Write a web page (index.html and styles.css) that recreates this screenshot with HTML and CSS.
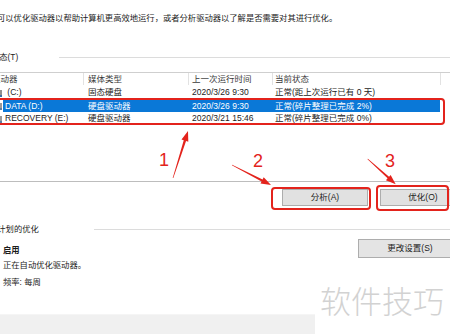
FILE: index.html
```html
<!DOCTYPE html>
<html lang="zh-CN">
<head>
<meta charset="utf-8">
<title>优化驱动器</title>
<link rel="stylesheet" href="styles.css">
</head>
<body>
<div class="page">
  <div class="intro">可以优化驱动器以帮助计算机更高效地运行，或者分析驱动器以了解是否需要对其进行优化。</div>

  <div class="group-head status-head">
    <span class="group-label status-label">状态(T)</span>
    <span class="group-line"></span>
  </div>

  <div class="listview">
    <div class="lv-row lv-header">
      <div class="c1">驱动器</div>
      <div class="c2">媒体类型</div>
      <div class="c3">上一次运行时间</div>
      <div class="c4">当前状态</div>
    </div>
    <div class="lv-row">
      <div class="c1"><svg class="drive" viewBox="0 0 14 10" width="14" height="10"><rect x="1" y="2" width="12" height="7" fill="#8f8f8f"/><rect x="1" y="7" width="12" height="2" fill="#3b6fa8"/></svg><span class="name"> (C:)</span></div>
      <div class="c2">固态硬盘</div>
      <div class="c3">2020/3/26 9:30</div>
      <div class="c4">正常(距上次运行已有 0 天)</div>
    </div>
    <div class="lv-row selected">
      <div class="c1"><svg class="drive" viewBox="0 0 14 10" width="14" height="10"><rect x="1" y="2" width="12" height="7" fill="#9a9a9a"/><rect x="1" y="7" width="12" height="2" fill="#5d7fa3"/></svg><span class="name">DATA (D:)</span></div>
      <div class="c2">硬盘驱动器</div>
      <div class="c3">2020/3/26 9:30</div>
      <div class="c4">正常(碎片整理已完成 2%)</div>
    </div>
    <div class="lv-row">
      <div class="c1"><svg class="drive" viewBox="0 0 14 10" width="14" height="10"><rect x="1" y="2" width="12" height="7" fill="#9a9a9a"/><rect x="1" y="7" width="12" height="2" fill="#5d7fa3"/></svg><span class="name">RECOVERY (E:)</span></div>
      <div class="c2">硬盘驱动器</div>
      <div class="c3">2020/3/21 15:46</div>
      <div class="c4">正常(碎片整理已完成 0%)</div>
    </div>
  </div>

  <div class="actions">
    <button class="btn btn-analyze">分析(A)</button>
    <button class="btn btn-optimize">优化(O)</button>
  </div>

  <div class="group-head sched-head">
    <span class="group-label sched-label">已计划的优化</span>
    <span class="group-line"></span>
  </div>

  <div class="sched-body">
    <div class="sched-info">
      <div class="sched-on">启用</div>
      <div class="sched-line sched-auto">正在自动优化驱动器。</div>
      <div class="sched-line sched-freq">频率: 每周</div>
    </div>
    <button class="btn btn-settings">更改设置(S)</button>
  </div>

  <div class="footer-bar"></div>

  <div class="watermark">软件技巧</div>

  <svg class="annot" width="450" height="334" viewBox="0 0 450 334">
    <rect x="-3" y="99" width="447" height="25" rx="3" class="rbox"/>
    <rect x="272" y="188" width="98" height="21" rx="3" class="rbox"/>
    <rect x="377" y="186" width="71" height="24" rx="3" class="rbox"/>
    <polygon class="arrow" points="172.7,177.9 183.75,140.23 181.5,139.5 188,131 188.3,141.7 186.05,140.97 173.3,178.1"/>
    <polygon class="arrow" points="232.14,164.73 262.6,179.45 263.7,177.3 271,185 260.5,183.55 261.6,181.41 231.86,165.27"/>
    <polygon class="arrow" points="367.9,158.78 389.04,176.74 390.66,174.96 395.7,184.3 385.94,180.14 387.56,178.36 367.5,159.22"/>
    <text x="159" y="166" class="num">1</text>
    <text x="253" y="167" class="num">2</text>
    <text x="385" y="167" class="num">3</text>
  </svg>
</div>
</body>
</html>
```

FILE: styles.css
```css
html, body {
  margin: 0;
  padding: 0;
  background: #ffffff;
}

body {
  width: 450px;
  height: 334px;
  overflow: hidden;
}

.page {
  position: relative;
  width: 450px;
  height: 334px;
  overflow: hidden;
  font-family: "Liberation Sans", "Noto Sans CJK SC", sans-serif;
  font-size: 8.5px;
  color: #1c1c1c;
}

.intro {
  margin-top: 12px;
  margin-left: -3px;
  height: 12px;
  line-height: 12px;
  font-size: 8.3px;
  white-space: nowrap;
}

.group-head {
  display: flex;
  align-items: center;
  height: 12px;
  line-height: 12px;
}

.status-head {
  margin-top: 27px;
}

.group-label {
  flex: none;
  white-space: nowrap;
}

.status-label {
  margin-left: -9px;
  font-size: 8.3px;
}

.group-line {
  flex: 1;
  height: 1px;
  background: #dcdcdc;
}

.status-head .group-line {
  margin-left: 41px;
}

.listview {
  margin-top: 9px;
  margin-left: -16px;
  width: 482px;
  height: 110px;
  box-sizing: border-box;
  border-top: 1px solid #cfcfcf;
  border-bottom: 1px solid #bdbdbd;
}

.lv-row {
  display: grid;
  grid-template-columns: 100px 105px 84px 168px;
  height: 13px;
  line-height: 13px;
  white-space: nowrap;
}

.lv-row > div {
  box-sizing: border-box;
  overflow: hidden;
}

.lv-header {
  color: #3a3a3a;
}

.lv-header > div {
  height: 12px;
  border-right: 1px solid #e2e2e2;
}

.c1 {
  padding-left: 8px;
}

.lv-row:not(.lv-header) .c1 {
  display: flex;
  align-items: center;
  padding-left: 5px;
}

.drive {
  flex: none;
  margin-right: 2px;
}

.name {
  white-space: pre;
}

.c2 {
  padding-left: 4px;
}

.c3 {
  padding-left: 3px;
}

.c4 {
  padding-left: 2px;
}

.lv-row.selected {
  margin-top: 1px;
  height: 12px;
  line-height: 12px;
  color: #ffffff;
}

.selected .c1 {
  background: linear-gradient(to right, transparent 19px, #0a78d7 19px);
}

.selected .c2,
.selected .c3,
.selected .c4 {
  background: #0a78d7;
}

.selected .c4 {
  margin-right: 1px;
}

.actions {
  display: flex;
  gap: 12px;
  margin-top: 7px;
  padding-left: 282px;
  width: 600px;
}

.btn {
  flex: none;
  box-sizing: border-box;
  margin: 0;
  padding: 0;
  border: 1px solid #adadad;
  background: #e1e1e1;
  font-family: "Liberation Sans", "Noto Sans CJK SC", sans-serif;
  font-size: 8.5px;
  color: #1c1c1c;
  text-align: center;
}

.btn-analyze,
.btn-optimize {
  width: 86px;
  height: 17px;
  line-height: 15px;
}

.sched-head {
  margin-top: 17px;
}

.sched-label {
  margin-left: -11px;
  font-size: 8.3px;
}

.sched-head .group-line {
  margin-left: 55px;
}

.sched-body {
  display: flex;
  align-items: flex-start;
  margin-top: 4px;
  margin-right: -12px;
}

.sched-info {
  flex: 1;
  padding-top: 5px;
  padding-left: 3px;
  font-size: 8.3px;
}

.sched-on {
  height: 12px;
  line-height: 12px;
  font-weight: bold;
}

.sched-line {
  height: 12px;
  line-height: 12px;
}

.sched-auto {
  margin-top: 3px;
}

.sched-freq {
  margin-top: 5px;
}

.btn-settings {
  width: 104px;
  height: 19px;
  line-height: 17px;
  background: #e4e4e4;
}

.footer-bar {
  margin-top: 26px;
  width: 315px;
  height: 20px;
  background: #f0f0f0;
  border-top: 1px solid #f5f5f5;
  box-sizing: border-box;
}

.watermark {
  position: absolute;
  left: 320px;
  top: 284px;
  font-family: "Noto Sans CJK SC", sans-serif;
  font-weight: 300;
  font-size: 31px;
  line-height: 31px;
  color: #d2d2d2;
  white-space: nowrap;
}

.annot {
  position: absolute;
  left: 0;
  top: 0;
  pointer-events: none;
}

.rbox {
  fill: none;
  stroke: #e3231c;
  stroke-width: 2;
}

.arrow {
  fill: #e3231c;
}

.num {
  fill: #e3231c;
  font-family: "Liberation Sans", sans-serif;
  font-size: 18px;
}
```
